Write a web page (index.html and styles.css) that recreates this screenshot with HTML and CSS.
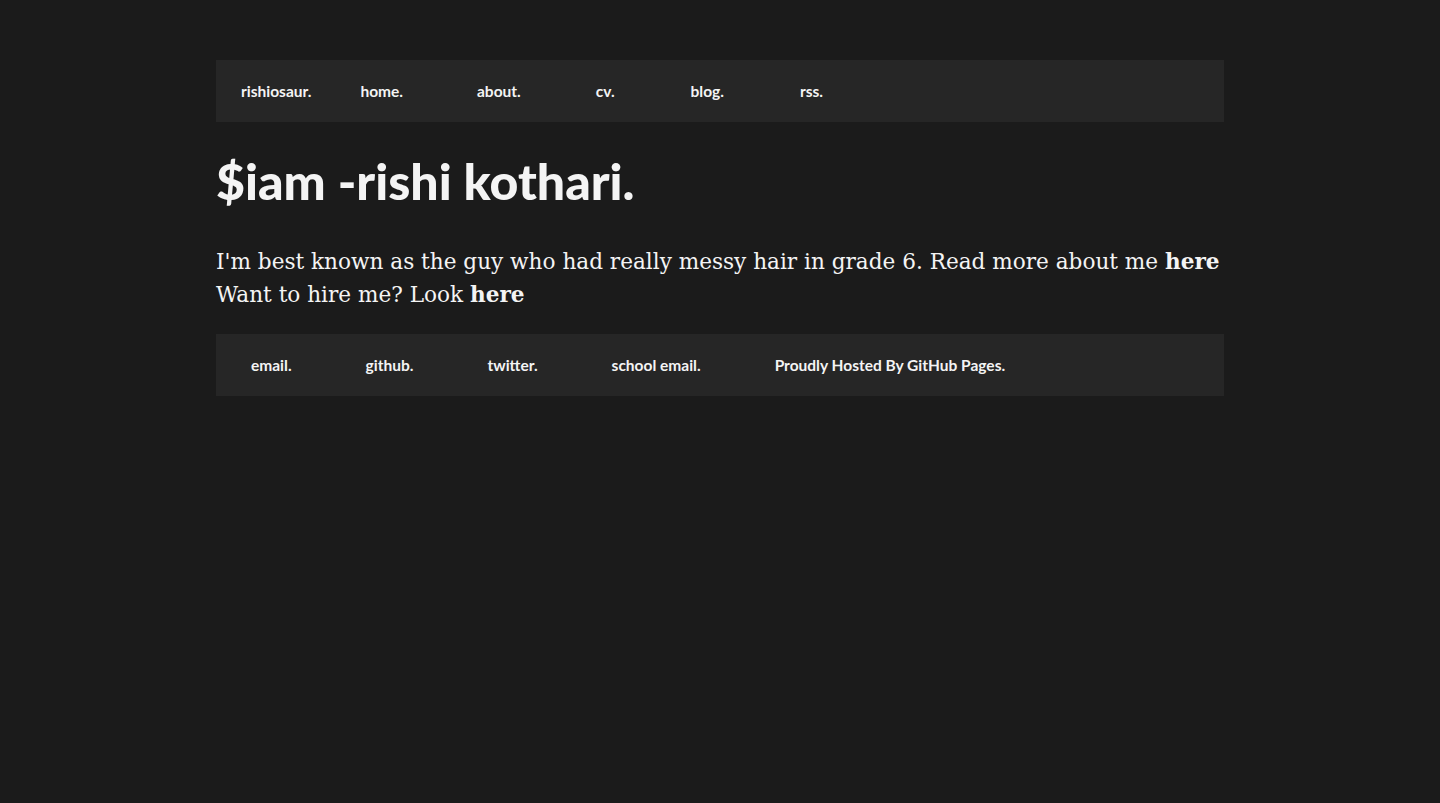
FILE: index.html
```html
<!DOCTYPE html>
<html>
<head>
<meta charset="utf-8">
<link rel="stylesheet" href="styles.css">
</head>
<body>
<div class="page">
  <nav class="bar top">
    <a class="item brand" href="#">rishiosaur.</a>
    <a class="item" href="#">home.</a>
    <a class="item" href="#">about.</a>
    <a class="item" href="#">cv.</a>
    <a class="item" href="#">blog.</a>
    <a class="item" href="#">rss.</a>
  </nav>
  <h1 class="title">$iam -rishi kothari.</h1>
  <p class="intro">I'm best known as the guy who had really messy hair in grade 6. Read more about me <a href="#">here</a><br>Want to hire me? Look <a href="#">here</a></p>
  <footer class="bar foot">
    <a class="item" href="#">email.</a>
    <a class="item" href="#">github.</a>
    <a class="item" href="#">twitter.</a>
    <a class="item" href="#">school email.</a>
    <a class="item" href="#">Proudly Hosted By GitHub Pages.</a>
  </footer>
</div>
</body>
</html>
```
FILE: styles.css
```css
html, body {
  margin: 0;
  padding: 0;
  background: #1b1b1b;
  color: #f4f4f4;
}
.page {
  width: 1008px;
  margin: 0 auto;
  padding-top: 60px;
}
.bar {
  background: #262626;
  height: 62px;
  display: flex;
  align-items: center;
  font-family: "Lato", sans-serif;
  font-weight: 700;
  font-size: 15.5px;
}
.bar .item {
  color: #f4f4f4;
  text-decoration: none;
  padding: 0 37px;
}
.top .item:nth-child(n+4) {
  padding: 0 38px;
}
.top .brand {
  padding-left: 25px;
  padding-right: 12px;
}
.foot .item:first-child {
  padding-left: 35px;
}
.title {
  font-family: "Lato", sans-serif;
  font-weight: 900;
  font-size: 50px;
  margin: 26px 0 0;
  line-height: 66px;
}
.intro {
  font-family: "DejaVu Serif", serif;
  font-size: 21.6px;
  line-height: 33px;
  margin: 31px 0 23px;
}
.intro a {
  color: #f4f4f4;
  font-weight: 700;
  text-decoration: none;
}
```
